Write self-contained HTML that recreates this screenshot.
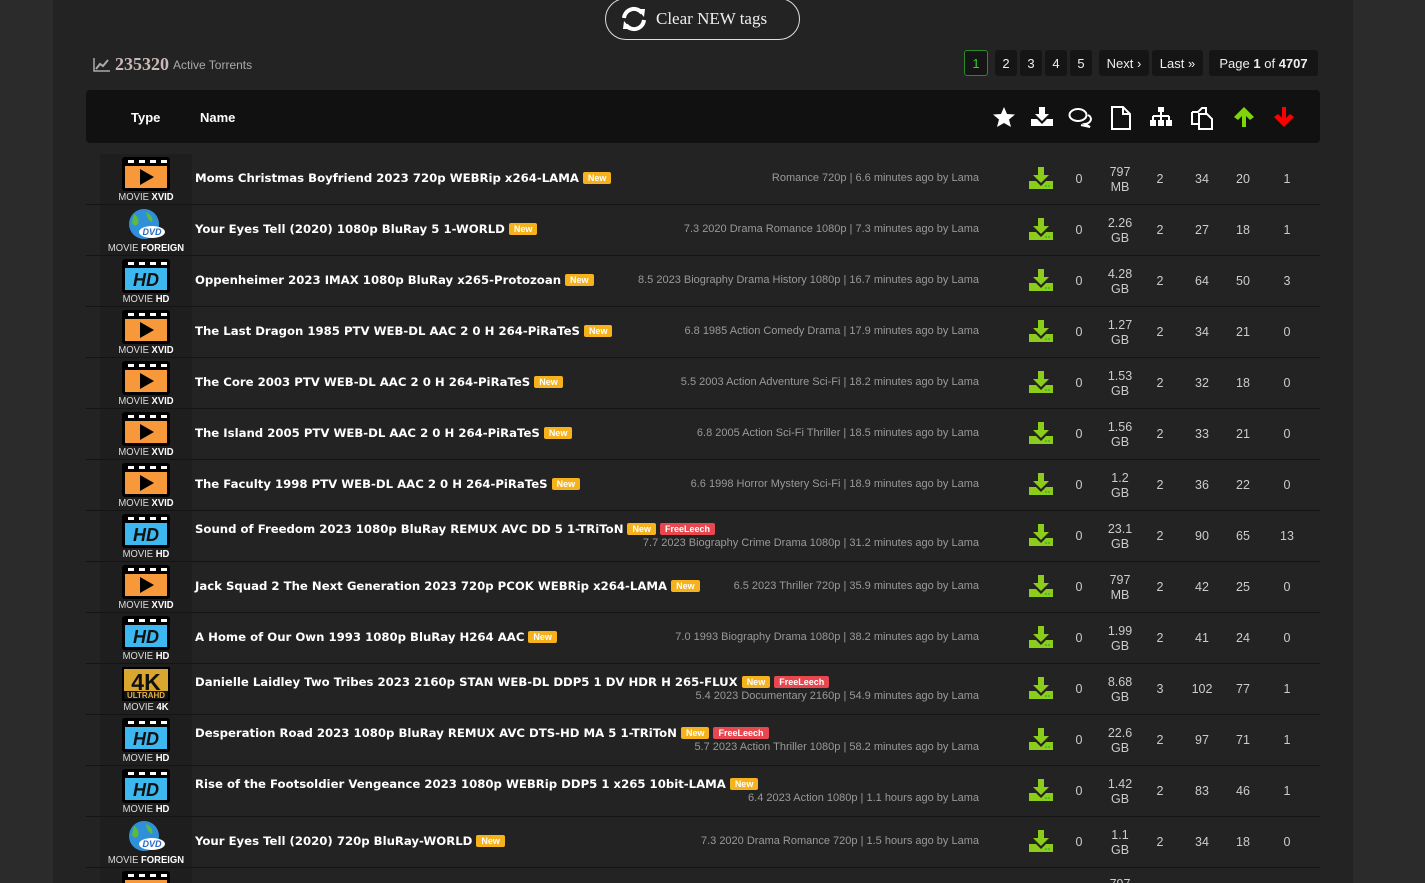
<!DOCTYPE html>
<html><head><meta charset="utf-8"><style>
*{margin:0;padding:0;box-sizing:border-box}
html,body{width:1425px;height:883px;overflow:hidden}
body{background:#2b2b2b;font-family:"Liberation Sans",sans-serif;color:#ddd;position:relative}
#panel{position:absolute;left:53px;top:0;width:1300px;height:883px;background:#232323}
.btn{position:absolute;left:605px;top:-2px;width:195px;height:42px;border:1px solid #ddd;border-radius:21px;color:#eee;font-family:"Liberation Serif",serif;font-size:17px;display:flex;align-items:center;padding-left:14px;gap:8px}
.stat{position:absolute;left:93px;top:54px;font-size:12px;color:#aaa;display:flex;align-items:center;gap:4px}
.stat b{font-family:"Liberation Serif",serif;font-size:18px;color:#c9b8b8}
.pg{position:absolute;top:50px;height:26px;background:#151515;border-radius:3px;color:#eee;font-size:13px;display:flex;align-items:center;justify-content:center}
.pg.on{border:1px solid #2a8a2a;color:#3c3}
.head{position:absolute;left:86px;top:90px;width:1234px;height:53px;background:#111;border-radius:4px;font-weight:bold;font-size:13px;color:#fff}
.head span{position:absolute;top:20px}
.hi{position:absolute;top:16px}
.row{position:absolute;left:86px;width:1234px;height:51px;border-bottom:1px solid #141414;overflow:hidden}
.tc{position:absolute;left:14px;top:0;width:92px;height:50px;background:#1e1e1e}
.tc svg{position:absolute;left:22px;top:3px}
.tl{position:absolute;top:37px;width:92px;text-align:center;font-size:10.5px;color:#ddd;transform:scaleX(0.9)}
.tl b{color:#fff}
.nm{position:absolute;left:109px;width:784px;font-family:"DejaVu Sans",sans-serif;font-weight:bold;font-size:11.7px;color:#fff;white-space:nowrap}
.one{top:17px;display:flex;justify-content:space-between;align-items:center}
.two{top:11px}
.meta{font-family:"Liberation Sans",sans-serif;font-weight:normal;font-size:11px;color:#999}
.two .meta{text-align:right;margin-top:1px}
.nw,.fl{display:inline-block;color:#fff;font-family:"Liberation Sans",sans-serif;font-size:9px;padding:1px 5px;border-radius:2px;margin-left:4px;vertical-align:1px}
.nw{background:#f5b21d}
.fl{background:#e8474f}
.c{position:absolute;text-align:center;font-size:12.5px;color:#ccc;width:40px}
.dl{position:absolute;left:943px;top:13px}
</style></head><body>
<div id="panel"></div>
<div class="btn"><svg width="28" height="26" viewBox="0 0 28 26"><path d="M4 12 A10 10 0 0 1 22 7" stroke="#fff" stroke-width="4" fill="none"/><path d="M17 3 L25 3 L24 11 Z" fill="#fff"/><path d="M24 14 A10 10 0 0 1 6 19" stroke="#fff" stroke-width="4" fill="none"/><path d="M11 23 L3 23 L4 15 Z" fill="#fff"/></svg>Clear NEW tags</div>
<div class="stat"><svg width="18" height="14" viewBox="0 0 18 14"><path d="M1 0 V13 H17" stroke="#aaa" stroke-width="1.5" fill="none"/><path d="M3 11 L7 6 L10 8 L15 2" stroke="#aaa" stroke-width="2" fill="none"/></svg><b>235320</b> Active Torrents</div>
<div class="pg on" style="left:964px;width:24px">1</div>
<div class="pg" style="left:995px;width:22px">2</div>
<div class="pg" style="left:1020px;width:22px">3</div>
<div class="pg" style="left:1045px;width:22px">4</div>
<div class="pg" style="left:1070px;width:22px">5</div>
<div class="pg" style="left:1099px;width:50px">Next ›</div>
<div class="pg" style="left:1152px;width:51px">Last »</div>
<div class="pg" style="left:1209px;width:109px">Page&nbsp;<b>1</b>&nbsp;of&nbsp;<b>4707</b></div>
<div class="head"><span style="left:45px">Type</span><span style="left:114px">Name</span>
<svg class="hi" style="left:906px" width="24" height="22" viewBox="0 0 24 22"><path d="M12 1 L15 8 L23 8.5 L17 13.5 L19 21 L12 17 L5 21 L7 13.5 L1 8.5 L9 8 Z" fill="#fff"/></svg>
<svg class="hi" style="left:944px" width="24" height="22" viewBox="0 0 24 22"><path d="M9 1 H15 V8 H19 L12 15 L5 8 H9 Z M1 13 H7 L12 18 L17 13 H23 V20 H1 Z" fill="#fff"/></svg>
<svg class="hi" style="left:982px" width="24" height="22" viewBox="0 0 24 22"><ellipse cx="10" cy="9" rx="8.5" ry="6" stroke="#fff" stroke-width="2" fill="none"/><path d="M20 9 A7 5 0 0 1 17 18 L22 21 L13 19" stroke="#fff" stroke-width="2" fill="none"/></svg>
<svg class="hi" style="left:1024px" width="22" height="24" viewBox="0 0 22 24"><path d="M2 1 H13 L20 8 V23 H2 Z M13 1 V8 H20" stroke="#fff" stroke-width="2" fill="none"/></svg>
<svg class="hi" style="left:1063px" width="24" height="22" viewBox="0 0 24 22"><rect x="9" y="1" width="6" height="5" fill="#fff"/><path d="M12 6 V10 M4 10 H20 M4 10 V14 M12 10 V14 M20 10 V14" stroke="#fff" stroke-width="2"/><rect x="1" y="14" width="6" height="6" fill="#fff"/><rect x="9" y="14" width="6" height="6" fill="#fff"/><rect x="17" y="14" width="6" height="6" fill="#fff"/></svg>
<svg class="hi" style="left:1104px" width="24" height="24" viewBox="0 0 24 24"><path d="M2 6 H8 L12 2 H16 V8 M2 6 V18 H8" stroke="#fff" stroke-width="2" fill="none"/><path d="M9 8 H17 L22 13 V23 H9 Z" stroke="#fff" stroke-width="2" fill="none"/></svg>
<svg class="hi" style="left:1146px" width="24" height="22" viewBox="0 0 24 22"><path d="M12 1 L22 11 L18 14 L14 10 V21 H10 V10 L6 14 L2 11 Z" fill="#7ed50b"/></svg>
<svg class="hi" style="left:1186px" width="24" height="22" viewBox="0 0 24 22"><path d="M12 21 L22 11 L18 8 L14 12 V1 H10 V12 L6 8 L2 11 Z" fill="#f00"/></svg>
</div>

<svg width="0" height="0" style="position:absolute"><defs>
<g id="dl"><path d="M9 0 H15 V8 H20 L12 16 L4 8 H9 Z M0 14 H7 L12 19 L17 14 H24 V22 H0 Z" fill="#8ccc1a"/><circle cx="17" cy="19" r="0.9" fill="#2a4"/><circle cx="20" cy="19" r="0.9" fill="#2a4"/></g>
<g id="clap"><rect x="0" y="0" width="48" height="34" rx="3" fill="#000"/><path d="M6 3 h6 v3 h-6z M17 3 h6 v3 h-6z M28 3 h6 v3 h-6z M39 3 h6 v3 h-6z" fill="#fff"/></g>
<g id="xvid"><use href="#clap"/><rect x="3" y="9" width="42" height="22" fill="#f7983a"/><path d="M18 12 L32 20 L18 28 Z" fill="#000"/></g>
<g id="hd"><use href="#clap"/><rect x="3" y="9" width="42" height="22" fill="#3db7ef"/><text x="24" y="27" text-anchor="middle" font-family="Liberation Sans" font-weight="bold" font-style="italic" font-size="18" fill="#111">HD</text></g>
<g id="k4"><rect x="0" y="0" width="48" height="34" fill="#000"/><rect x="2" y="2" width="44" height="30" fill="#d9a630"/><text x="24" y="23" text-anchor="middle" font-family="Liberation Sans" font-weight="bold" font-size="23" fill="#111">4K</text><rect x="2" y="24" width="44" height="8" fill="#111"/><text x="24" y="31" text-anchor="middle" font-family="Liberation Sans" font-weight="bold" font-size="8" fill="#e2b040">ULTRAHD</text></g>
<g id="fr"><circle cx="22" cy="16" r="15" fill="#2f8fd8"/><path d="M12 6 Q18 10 16 16 Q12 20 10 14 Z M24 4 Q32 8 30 14 Q25 12 24 4 Z" fill="#5cbb3a"/><ellipse cx="30" cy="24" rx="13" ry="6" fill="#fff"/><text x="30" y="27" text-anchor="middle" font-family="Liberation Sans" font-weight="bold" font-style="italic" font-size="9" fill="#2a6ac0">DVD</text></g>
</defs></svg>

<div class="row" style="top:154px"><div class="tc"><svg width="48" height="34"><use href="#xvid"/></svg><div class="tl">MOVIE <b>XVID</b></div></div>
<div class="nm one"><span>Moms Christmas Boyfriend 2023 720p WEBRip x264-LAMA<span class="nw">New</span></span><span class="meta">Romance 720p | 6.6 minutes ago by Lama</span></div>
<svg class="dl" width="24" height="22"><use href="#dl"/></svg><div class="c" style="left:973px;top:18px">0</div><div class="c" style="left:1014px;top:11px;line-height:15px">797<br>MB</div><div class="c" style="left:1054px;top:18px">2</div><div class="c" style="left:1096px;top:18px">34</div><div class="c" style="left:1137px;top:18px">20</div><div class="c" style="left:1181px;top:18px">1</div></div>

<div class="row" style="top:205px"><div class="tc"><svg width="48" height="34"><use href="#fr"/></svg><div class="tl">MOVIE <b>FOREIGN</b></div></div>
<div class="nm one"><span>Your Eyes Tell (2020) 1080p BluRay 5 1-WORLD<span class="nw">New</span></span><span class="meta">7.3 2020 Drama Romance 1080p | 7.3 minutes ago by Lama</span></div>
<svg class="dl" width="24" height="22"><use href="#dl"/></svg><div class="c" style="left:973px;top:18px">0</div><div class="c" style="left:1014px;top:11px;line-height:15px">2.26<br>GB</div><div class="c" style="left:1054px;top:18px">2</div><div class="c" style="left:1096px;top:18px">27</div><div class="c" style="left:1137px;top:18px">18</div><div class="c" style="left:1181px;top:18px">1</div></div>

<div class="row" style="top:256px"><div class="tc"><svg width="48" height="34"><use href="#hd"/></svg><div class="tl">MOVIE <b>HD</b></div></div>
<div class="nm one"><span>Oppenheimer 2023 IMAX 1080p BluRay x265-Protozoan<span class="nw">New</span></span><span class="meta">8.5 2023 Biography Drama History 1080p | 16.7 minutes ago by Lama</span></div>
<svg class="dl" width="24" height="22"><use href="#dl"/></svg><div class="c" style="left:973px;top:18px">0</div><div class="c" style="left:1014px;top:11px;line-height:15px">4.28<br>GB</div><div class="c" style="left:1054px;top:18px">2</div><div class="c" style="left:1096px;top:18px">64</div><div class="c" style="left:1137px;top:18px">50</div><div class="c" style="left:1181px;top:18px">3</div></div>

<div class="row" style="top:307px"><div class="tc"><svg width="48" height="34"><use href="#xvid"/></svg><div class="tl">MOVIE <b>XVID</b></div></div>
<div class="nm one"><span>The Last Dragon 1985 PTV WEB-DL AAC 2 0 H 264-PiRaTeS<span class="nw">New</span></span><span class="meta">6.8 1985 Action Comedy Drama | 17.9 minutes ago by Lama</span></div>
<svg class="dl" width="24" height="22"><use href="#dl"/></svg><div class="c" style="left:973px;top:18px">0</div><div class="c" style="left:1014px;top:11px;line-height:15px">1.27<br>GB</div><div class="c" style="left:1054px;top:18px">2</div><div class="c" style="left:1096px;top:18px">34</div><div class="c" style="left:1137px;top:18px">21</div><div class="c" style="left:1181px;top:18px">0</div></div>

<div class="row" style="top:358px"><div class="tc"><svg width="48" height="34"><use href="#xvid"/></svg><div class="tl">MOVIE <b>XVID</b></div></div>
<div class="nm one"><span>The Core 2003 PTV WEB-DL AAC 2 0 H 264-PiRaTeS<span class="nw">New</span></span><span class="meta">5.5 2003 Action Adventure Sci-Fi | 18.2 minutes ago by Lama</span></div>
<svg class="dl" width="24" height="22"><use href="#dl"/></svg><div class="c" style="left:973px;top:18px">0</div><div class="c" style="left:1014px;top:11px;line-height:15px">1.53<br>GB</div><div class="c" style="left:1054px;top:18px">2</div><div class="c" style="left:1096px;top:18px">32</div><div class="c" style="left:1137px;top:18px">18</div><div class="c" style="left:1181px;top:18px">0</div></div>

<div class="row" style="top:409px"><div class="tc"><svg width="48" height="34"><use href="#xvid"/></svg><div class="tl">MOVIE <b>XVID</b></div></div>
<div class="nm one"><span>The Island 2005 PTV WEB-DL AAC 2 0 H 264-PiRaTeS<span class="nw">New</span></span><span class="meta">6.8 2005 Action Sci-Fi Thriller | 18.5 minutes ago by Lama</span></div>
<svg class="dl" width="24" height="22"><use href="#dl"/></svg><div class="c" style="left:973px;top:18px">0</div><div class="c" style="left:1014px;top:11px;line-height:15px">1.56<br>GB</div><div class="c" style="left:1054px;top:18px">2</div><div class="c" style="left:1096px;top:18px">33</div><div class="c" style="left:1137px;top:18px">21</div><div class="c" style="left:1181px;top:18px">0</div></div>

<div class="row" style="top:460px"><div class="tc"><svg width="48" height="34"><use href="#xvid"/></svg><div class="tl">MOVIE <b>XVID</b></div></div>
<div class="nm one"><span>The Faculty 1998 PTV WEB-DL AAC 2 0 H 264-PiRaTeS<span class="nw">New</span></span><span class="meta">6.6 1998 Horror Mystery Sci-Fi | 18.9 minutes ago by Lama</span></div>
<svg class="dl" width="24" height="22"><use href="#dl"/></svg><div class="c" style="left:973px;top:18px">0</div><div class="c" style="left:1014px;top:11px;line-height:15px">1.2<br>GB</div><div class="c" style="left:1054px;top:18px">2</div><div class="c" style="left:1096px;top:18px">36</div><div class="c" style="left:1137px;top:18px">22</div><div class="c" style="left:1181px;top:18px">0</div></div>

<div class="row" style="top:511px"><div class="tc"><svg width="48" height="34"><use href="#hd"/></svg><div class="tl">MOVIE <b>HD</b></div></div>
<div class="nm two"><div>Sound of Freedom 2023 1080p BluRay REMUX AVC DD 5 1-TRiToN<span class="nw">New</span><span class="fl">FreeLeech</span></div><div class="meta">7.7 2023 Biography Crime Drama 1080p | 31.2 minutes ago by Lama</div></div>
<svg class="dl" width="24" height="22"><use href="#dl"/></svg><div class="c" style="left:973px;top:18px">0</div><div class="c" style="left:1014px;top:11px;line-height:15px">23.1<br>GB</div><div class="c" style="left:1054px;top:18px">2</div><div class="c" style="left:1096px;top:18px">90</div><div class="c" style="left:1137px;top:18px">65</div><div class="c" style="left:1181px;top:18px">13</div></div>

<div class="row" style="top:562px"><div class="tc"><svg width="48" height="34"><use href="#xvid"/></svg><div class="tl">MOVIE <b>XVID</b></div></div>
<div class="nm one"><span>Jack Squad 2 The Next Generation 2023 720p PCOK WEBRip x264-LAMA<span class="nw">New</span></span><span class="meta">6.5 2023 Thriller 720p | 35.9 minutes ago by Lama</span></div>
<svg class="dl" width="24" height="22"><use href="#dl"/></svg><div class="c" style="left:973px;top:18px">0</div><div class="c" style="left:1014px;top:11px;line-height:15px">797<br>MB</div><div class="c" style="left:1054px;top:18px">2</div><div class="c" style="left:1096px;top:18px">42</div><div class="c" style="left:1137px;top:18px">25</div><div class="c" style="left:1181px;top:18px">0</div></div>

<div class="row" style="top:613px"><div class="tc"><svg width="48" height="34"><use href="#hd"/></svg><div class="tl">MOVIE <b>HD</b></div></div>
<div class="nm one"><span>A Home of Our Own 1993 1080p BluRay H264 AAC<span class="nw">New</span></span><span class="meta">7.0 1993 Biography Drama 1080p | 38.2 minutes ago by Lama</span></div>
<svg class="dl" width="24" height="22"><use href="#dl"/></svg><div class="c" style="left:973px;top:18px">0</div><div class="c" style="left:1014px;top:11px;line-height:15px">1.99<br>GB</div><div class="c" style="left:1054px;top:18px">2</div><div class="c" style="left:1096px;top:18px">41</div><div class="c" style="left:1137px;top:18px">24</div><div class="c" style="left:1181px;top:18px">0</div></div>

<div class="row" style="top:664px"><div class="tc"><svg width="48" height="34"><use href="#k4"/></svg><div class="tl">MOVIE <b>4K</b></div></div>
<div class="nm two"><div>Danielle Laidley Two Tribes 2023 2160p STAN WEB-DL DDP5 1 DV HDR H 265-FLUX<span class="nw">New</span><span class="fl">FreeLeech</span></div><div class="meta">5.4 2023 Documentary 2160p | 54.9 minutes ago by Lama</div></div>
<svg class="dl" width="24" height="22"><use href="#dl"/></svg><div class="c" style="left:973px;top:18px">0</div><div class="c" style="left:1014px;top:11px;line-height:15px">8.68<br>GB</div><div class="c" style="left:1054px;top:18px">3</div><div class="c" style="left:1096px;top:18px">102</div><div class="c" style="left:1137px;top:18px">77</div><div class="c" style="left:1181px;top:18px">1</div></div>

<div class="row" style="top:715px"><div class="tc"><svg width="48" height="34"><use href="#hd"/></svg><div class="tl">MOVIE <b>HD</b></div></div>
<div class="nm two"><div>Desperation Road 2023 1080p BluRay REMUX AVC DTS-HD MA 5 1-TRiToN<span class="nw">New</span><span class="fl">FreeLeech</span></div><div class="meta">5.7 2023 Action Thriller 1080p | 58.2 minutes ago by Lama</div></div>
<svg class="dl" width="24" height="22"><use href="#dl"/></svg><div class="c" style="left:973px;top:18px">0</div><div class="c" style="left:1014px;top:11px;line-height:15px">22.6<br>GB</div><div class="c" style="left:1054px;top:18px">2</div><div class="c" style="left:1096px;top:18px">97</div><div class="c" style="left:1137px;top:18px">71</div><div class="c" style="left:1181px;top:18px">1</div></div>

<div class="row" style="top:766px"><div class="tc"><svg width="48" height="34"><use href="#hd"/></svg><div class="tl">MOVIE <b>HD</b></div></div>
<div class="nm two"><div>Rise of the Footsoldier Vengeance 2023 1080p WEBRip DDP5 1 x265 10bit-LAMA<span class="nw">New</span></div><div class="meta">6.4 2023 Action 1080p | 1.1 hours ago by Lama</div></div>
<svg class="dl" width="24" height="22"><use href="#dl"/></svg><div class="c" style="left:973px;top:18px">0</div><div class="c" style="left:1014px;top:11px;line-height:15px">1.42<br>GB</div><div class="c" style="left:1054px;top:18px">2</div><div class="c" style="left:1096px;top:18px">83</div><div class="c" style="left:1137px;top:18px">46</div><div class="c" style="left:1181px;top:18px">1</div></div>

<div class="row" style="top:817px"><div class="tc"><svg width="48" height="34"><use href="#fr"/></svg><div class="tl">MOVIE <b>FOREIGN</b></div></div>
<div class="nm one"><span>Your Eyes Tell (2020) 720p BluRay-WORLD<span class="nw">New</span></span><span class="meta">7.3 2020 Drama Romance 720p | 1.5 hours ago by Lama</span></div>
<svg class="dl" width="24" height="22"><use href="#dl"/></svg><div class="c" style="left:973px;top:18px">0</div><div class="c" style="left:1014px;top:11px;line-height:15px">1.1<br>GB</div><div class="c" style="left:1054px;top:18px">2</div><div class="c" style="left:1096px;top:18px">34</div><div class="c" style="left:1137px;top:18px">18</div><div class="c" style="left:1181px;top:18px">0</div></div>

<div class="row" style="top:868px;height:15px;border:none"><div class="tc" style="height:15px"><svg width="48" height="34"><use href="#xvid"/></svg></div><div class="c" style="left:1014px;top:9px">797</div></div>
</body></html>
